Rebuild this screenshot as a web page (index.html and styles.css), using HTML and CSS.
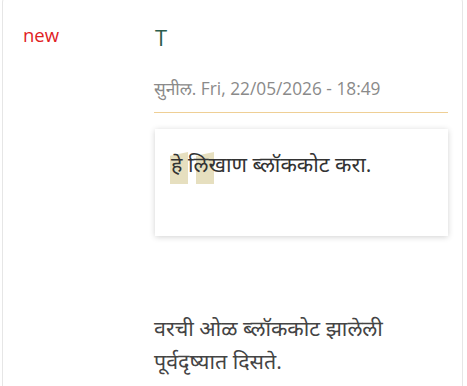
FILE: index.html
```html
<!DOCTYPE html>
<html lang="mr">
<head>
<meta charset="utf-8">
<link rel="stylesheet" href="styles.css">
</head>
<body>
<div class="card">
  <div class="side"><span class="new">new</span></div>
  <div class="main">
    <h3 class="title">T</h3>
    <div class="meta">सुनील. Fri, 22/05/2026 - 18:49</div>
    <blockquote class="quote">
      <span class="qmark"><span></span><span></span></span>
      <p>हे लिखाण ब्लॉककोट करा.</p>
    </blockquote>
    <p class="body">वरची ओळ ब्लॉककोट झालेली<br>पूर्वदृष्यात दिसते.</p>
  </div>
</div>
</body>
</html>
```
FILE: styles.css
```css
html, body {
  margin: 0;
  padding: 0;
  background: #fff;
}
body {
  font-family: "Open Sans", "Noto Sans Devanagari", "Noto Sans", sans-serif;
  overflow: hidden;
  height: 386px;
}
.card {
  margin: -6px 4px 0 2px;
  border: 1px solid #e6e6e6;
  border-radius: 8px;
  height: 420px;
  display: flex;
  box-sizing: border-box;
}
.side {
  width: 151px;
  padding: 28px 0 0 20px;
  box-sizing: border-box;
}
.new {
  color: #e0201e;
  font-size: 18.5px;
  line-height: 24px;
}
.main {
  width: 294px;
}
.title {
  margin: 27px 0 0 1px;
  font-weight: 400;
  font-size: 22px;
  line-height: 30px;
  color: #2b5d4c;
}
.meta {
  margin-top: 24px;
  color: #8a8a8a;
  font-size: 17.3px;
  line-height: 25px;
  padding-bottom: 11px;
  border-bottom: 1px solid #efcf95;
}
.quote {
  position: relative;
  margin: 16px 0 0 1px;
  height: 107px;
  box-sizing: border-box;
  padding: 20px 16px;
  background: #fff;
  box-shadow: 0 1px 6px rgba(0,0,0,0.18);
}
.qmark {
  position: absolute;
  left: 15px;
  top: 23px;
  display: flex;
  gap: 8px;
}
.qmark span {
  width: 18px;
  height: 32px;
  background: #e6dfbf;
  clip-path: polygon(0 12%, 100% 0, 100% 100%, 0 100%);
}
.quote p {
  position: relative;
  margin: 0;
  font-size: 21.4px;
  line-height: 30px;
  color: #333;
}
.body {
  margin: 75px 0 0 0;
  font-size: 21.4px;
  line-height: 33px;
  color: #444;
}
```
